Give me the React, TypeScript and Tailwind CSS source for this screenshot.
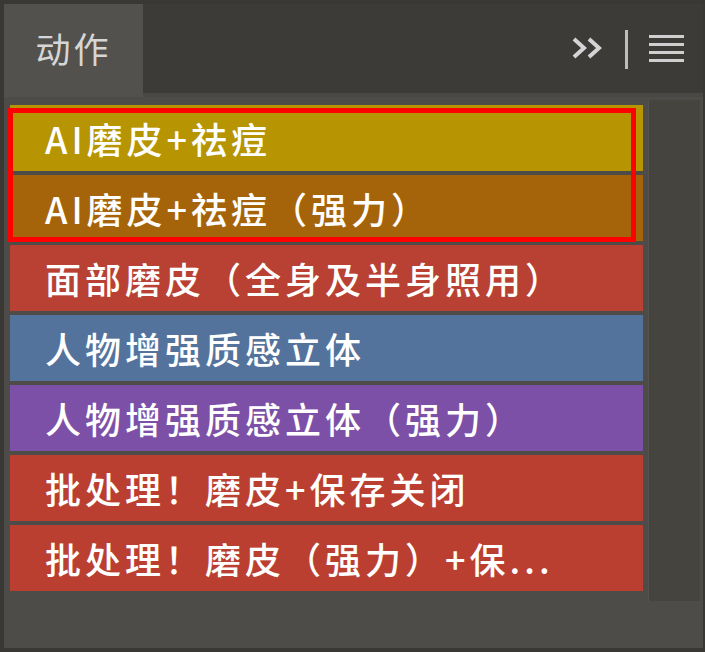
import { ReactNode } from 'react';

const rows = [
  { label: 'AI磨皮+祛痘', color: 'bg-[#b69402]' },
  { label: 'AI磨皮+祛痘（强力）', color: 'bg-[#a6640a]' },
  { label: '面部磨皮（全身及半身照用）', color: 'bg-[#b94134]' },
  { label: '人物增强质感立体', color: 'bg-[#53739d]' },
  { label: '人物增强质感立体（强力）', color: 'bg-[#7d50a7]' },
  { label: '批处理！磨皮+保存关闭', color: 'bg-[#bb3f30]' },
  { label: '批处理！磨皮（强力）+保...', color: 'bg-[#bb3f31]' },
];

const font = { fontFamily: '"Noto Sans CJK SC", "Noto Sans", sans-serif' };

const Row = ({ label, color }: { label: string; color: string }): ReactNode => (
  <div className={`${color} h-[66px] flex items-center pl-[35px] text-white text-[36px] font-medium tracking-[4px] leading-none whitespace-nowrap`}>
    {label}
  </div>
);

export default function App() {
  return (
    <div className="w-[705px] h-[652px] bg-[#3a3834] pt-1 pl-1 pr-[2px] pb-1 flex flex-col" style={font}>
      <div className="h-[93px] flex">
        <div className="w-[139px] bg-[#53514d] flex items-center justify-center text-[35px] tracking-[3px] text-[#d6d6d6] pb-[4px]">
          动作
        </div>
        <div className="flex-1 bg-[#3d3b37] border-b-[4px] border-[#4a4844] flex items-center justify-end pr-[19px] gap-[21px]">
          <svg width="33" height="28" viewBox="0 0 33 28" className="mb-[2px]">
            <path d="M3 5 L13 14 L3 23" stroke="#d4d4d4" strokeWidth="4" fill="none" />
            <path d="M18 5 L28 14 L18 23" stroke="#d4d4d4" strokeWidth="4" fill="none" />
          </svg>
          <div className="w-[3px] h-[39px] bg-[#bdbdbd] mt-[2px]" />
          <div className="w-[35px] flex flex-col gap-[5px]">
            <div className="h-[3px] bg-[#cfcfcf]" />
            <div className="h-[3px] bg-[#cfcfcf]" />
            <div className="h-[3px] bg-[#cfcfcf]" />
            <div className="h-[3px] bg-[#cfcfcf]" />
          </div>
        </div>
      </div>
      <div className="flex-1 bg-[#4e4c48] flex pl-[6px] pt-[8px]">
        <div className="w-[633px] relative flex flex-col gap-[4px]">
          {rows.map((r, i) => (
            <Row key={i} label={r.label} color={r.color} />
          ))}
          <div className="absolute left-[-2px] top-[3px] w-[628px] h-[134px] border-[5px] border-[#ff0000]" />
        </div>
        <div className="ml-[5px] mt-[-5px] w-[52px] h-[501px] bg-[#46443f] border-l border-[#55534f]" />
      </div>
    </div>
  );
}
